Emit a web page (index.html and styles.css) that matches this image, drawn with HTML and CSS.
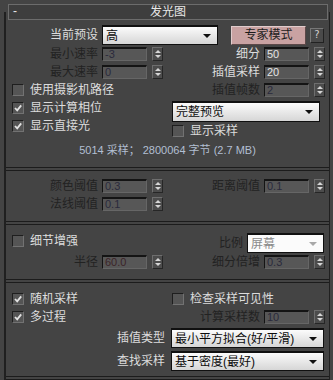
FILE: index.html
```html
<!DOCTYPE html>
<html lang="zh-CN">
<head>
    <meta charset="UTF-8">
    <meta name="viewport" content="width=device-width, initial-scale=1.0">
    <title>发光图</title>
    <link rel="stylesheet" href="styles.css">
</head>
<body>
    <div class="rollout">
        <div class="rollout-title">
            <span class="collapse">-</span>
            <span class="title-text">发光图</span>
        </div>

        <!-- basic parameters -->
        <div class="group g-basic">
            <div class="row-top">
                <label class="lbl lbl-left">当前预设</label>
                <div class="dropdown dd-preset"><span>高</span><i class="arrow"></i></div>
                <button class="expert">专家模式</button>
                <button class="help">?</button>
            </div>
            <div class="cols">
                <div class="col col-left">
                    <div class="field"><label class="lbl lbl-left dim">最小速率</label><div class="num off">-3</div><div class="spin"></div></div>
                    <div class="field"><label class="lbl lbl-left dim">最大速率</label><div class="num off">0</div><div class="spin"></div></div>
                    <div class="check"><span class="box"></span>使用摄影机路径</div>
                    <div class="check"><span class="box on"><svg viewBox="0 0 10 10"><path d="M2 5 L4.2 7.4 L8.2 2.4"/></svg></span>显示计算相位</div>
                    <div class="check"><span class="box on"><svg viewBox="0 0 10 10"><path d="M2 5 L4.2 7.4 L8.2 2.4"/></svg></span>显示直接光</div>
                </div>
                <div class="col col-right">
                    <div class="field"><label class="lbl lbl-right">细分</label><div class="num">50</div><div class="spin"></div></div>
                    <div class="field"><label class="lbl lbl-right">插值采样</label><div class="num">20</div><div class="spin"></div></div>
                    <div class="field"><label class="lbl lbl-right dim">插值帧数</label><div class="num off">2</div><div class="spin"></div></div>
                    <div class="dropdown dd-mode"><span>完整预览</span><i class="arrow"></i></div>
                    <div class="check"><span class="box"></span>显示采样</div>
                </div>
            </div>
            <div class="stats">5014 采样； 2800064 字节 (2.7 MB)</div>
        </div>
        <div class="sep"></div>

        <!-- thresholds -->
        <div class="group g-thresh">
            <div class="cols">
                <div class="col col-left">
                    <div class="field"><label class="lbl lbl-left dim">颜色阈值</label><div class="num off">0.3</div><div class="spin"></div></div>
                    <div class="field"><label class="lbl lbl-left dim">法线阈值</label><div class="num off">0.1</div><div class="spin"></div></div>
                </div>
                <div class="col col-right">
                    <div class="field"><label class="lbl lbl-right dim">距离阈值</label><div class="num off">0.1</div><div class="spin"></div></div>
                </div>
            </div>
        </div>
        <div class="sep"></div>

        <!-- detail enhancement -->
        <div class="group g-detail">
            <div class="cols">
                <div class="col col-left">
                    <div class="check detail-row"><span class="box"></span>细节增强</div>
                    <div class="field"><label class="lbl lbl-left dim">半径</label><div class="num off red">60.0</div><div class="spin"></div></div>
                </div>
                <div class="col col-right">
                    <div class="scale-row">
                        <label class="lbl dim">比例</label>
                        <div class="dropdown dd-scale disabled"><span>屏幕</span><i class="arrow"></i></div>
                    </div>
                    <div class="field"><label class="lbl lbl-right dim">细分倍增</label><div class="num off">0.3</div><div class="spin"></div></div>
                </div>
            </div>
        </div>
        <div class="sep"></div>

        <!-- sampling -->
        <div class="group g-sample">
            <div class="cols">
                <div class="col col-left">
                    <div class="check"><span class="box on"><svg viewBox="0 0 10 10"><path d="M2 5 L4.2 7.4 L8.2 2.4"/></svg></span>随机采样</div>
                    <div class="check"><span class="box on"><svg viewBox="0 0 10 10"><path d="M2 5 L4.2 7.4 L8.2 2.4"/></svg></span>多过程</div>
                </div>
                <div class="col col-right">
                    <div class="check"><span class="box"></span>检查采样可见性</div>
                    <div class="field"><label class="lbl lbl-right dim">计算采样数</label><div class="num off">10</div><div class="spin"></div></div>
                </div>
            </div>
            <div class="wide-row first">
                <label class="lbl lbl-wide">插值类型</label>
                <div class="dropdown dd-wide"><span>最小平方拟合(好/平滑)</span><i class="arrow"></i></div>
            </div>
            <div class="wide-row">
                <label class="lbl lbl-wide">查找采样</label>
                <div class="dropdown dd-wide"><span>基于密度(最好)</span><i class="arrow"></i></div>
            </div>
        </div>
        <div class="sep"></div>
    </div>
</body>
</html>
```

FILE: styles.css
```css
* {
    box-sizing: border-box;
}

body {
    margin: 0;
    background-color: #444444;
    color: #dcdcdc;
    font-family: "Liberation Sans", "Noto Sans CJK SC", sans-serif;
    font-size: 12px;
    line-height: 14px;
    overflow: hidden;
}

.rollout {
    display: flex;
    flex-direction: column;
    margin: 12px 3px 0 4px;
    border-left: 2px solid #202020;
    border-right: 1px solid #202020;
    height: 368px;
}

.rollout-title {
    display: flex;
    align-items: center;
    justify-content: center;
    position: relative;
    height: 16px;
    margin: -8px 1px 0 2px;
    background-color: #3e3e3e;
    border: 1px solid #6c6c6c;
    color: #e8e8e8;
}

.collapse {
    position: absolute;
    left: 4px;
    top: 0;
    line-height: 13px;
}

.title-text {
    line-height: 14px;
}

/* groups */

.group {
    display: flex;
    flex-direction: column;
}

.g-basic {
    padding: 5px 0 9px;
}

.g-thresh {
    padding: 6px 0 8px;
}

.g-detail {
    padding: 8px 0 8px;
}

.g-sample {
    padding: 7px 0 5px;
}

.sep {
    height: 4px;
    flex-shrink: 0;
    border-top: 1px solid #1c1c1c;
    border-bottom: 1px solid #1c1c1c;
}

.cols {
    display: flex;
}

.col {
    display: flex;
    flex-direction: column;
}

.col-left {
    width: 166px;
}

.col-right {
    flex: 1;
}

/* labels */

.lbl {
    white-space: nowrap;
    margin-right: 4px;
}

.lbl-left {
    width: 92px;
    text-align: right;
}

.lbl-right {
    width: 88px;
    text-align: right;
}

.lbl-wide {
    width: 159px;
    text-align: right;
    margin-right: 6px;
}

.dim {
    color: #222222;
}

/* top row */

.row-top {
    display: flex;
    align-items: center;
    height: 20px;
}

.expert {
    width: 75px;
    height: 19px;
    margin-left: 13px;
    padding: 0;
    font: inherit;
    line-height: 14px;
    color: #1c1c1c;
    background-color: #c9a2a2;
    border: 1px solid;
    border-color: #e0cccc #5c4848 #5c4848 #e0cccc;
}

.help {
    width: 14px;
    height: 15px;
    margin-left: 4px;
    padding: 0;
    font-family: "DejaVu Sans", sans-serif;
    font-size: 10px;
    line-height: 12px;
    color: #cfcfcf;
    background-color: #4a4a4a;
    border: 1px solid;
    border-color: #777777 #222222 #222222 #777777;
}

/* numeric fields */

.field {
    display: flex;
    align-items: center;
    height: 18px;
}

.num {
    width: 45px;
    height: 14px;
    padding-left: 2px;
    font-size: 11px;
    line-height: 11px;
    color: #e4e4e4;
    background-color: #575757;
    border-top: 2px solid #141414;
    border-left: 1px solid #141414;
    border-right: 1px solid #666666;
    border-bottom: 1px solid #666666;
}

.num.off {
    color: #2a2a3c;
}

.num.red {
    color: #3c2428;
}

.spin {
    display: flex;
    flex-direction: column;
    align-items: center;
    justify-content: space-around;
    width: 11px;
    height: 14px;
    margin-left: 5px;
    padding: 1px 0;
    background-color: #4c4c4c;
    border: 1px solid;
    border-color: #6e6e6e #262626 #262626 #6e6e6e;
}

.spin::before,
.spin::after {
    content: "";
    width: 0;
    height: 0;
    border-left: 3px solid transparent;
    border-right: 3px solid transparent;
}

.spin::before {
    border-bottom: 3px solid #d6d6d6;
}

.spin::after {
    border-top: 3px solid #d6d6d6;
}

/* checkboxes */

.check {
    display: flex;
    align-items: center;
    height: 18px;
    white-space: nowrap;
}

.col-left .check {
    padding-left: 6px;
}

.box {
    display: flex;
    align-items: center;
    justify-content: center;
    width: 12px;
    height: 12px;
    margin-right: 6px;
    background-color: #555555;
    border: 1px solid;
    border-color: #1e1e1e #727272 #727272 #1e1e1e;
}

.box svg {
    width: 10px;
    height: 10px;
}

.box path {
    fill: none;
    stroke: #e2e2e2;
    stroke-width: 1.8;
}

.detail-row {
    height: 20px;
    padding-bottom: 5px;
}

/* dropdowns */

.dropdown {
    display: flex;
    align-items: center;
    height: 20px;
    padding: 0 6px 0 3px;
    color: #0c0c0c;
    background: linear-gradient(#fbfbfb, #d6d6d6);
    border: 1px solid #101010;
    border-top-width: 2px;
    white-space: nowrap;
}

.dropdown span {
    flex: 1;
    line-height: 14px;
}

.arrow {
    width: 0;
    height: 0;
    border-left: 4px solid transparent;
    border-right: 4px solid transparent;
    border-top: 4px solid #101010;
}

.dd-preset {
    width: 116px;
}

.dd-mode {
    width: 148px;
    height: 21px;
    margin-top: 2px;
}

.dd-scale {
    width: 77px;
}

.dd-wide {
    width: 153px;
}

.dropdown.disabled {
    color: #8a8a8a;
    background: #fbfbfb;
}

.dropdown.disabled .arrow {
    border-top-color: #a8a8a8;
}

.scale-row {
    display: flex;
    align-items: center;
    justify-content: flex-end;
    height: 20px;
    padding-right: 5px;
}

.wide-row {
    display: flex;
    align-items: center;
    margin-top: 3px;
}

.wide-row.first {
    margin-top: 2px;
}

/* memory stats */

.stats {
    height: 16px;
    margin-top: 2px;
    text-align: center;
    font-size: 11px;
    line-height: 16px;
    color: #b2bfd2;
}
```
